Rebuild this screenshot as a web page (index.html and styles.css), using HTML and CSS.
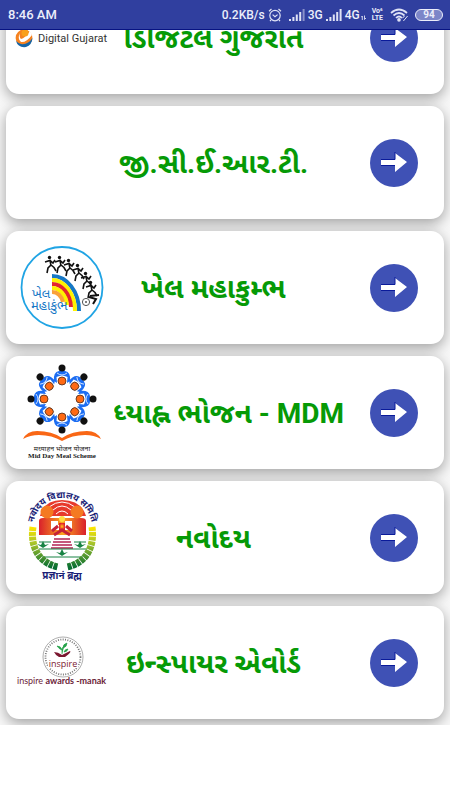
FILE: index.html
```
<!DOCTYPE html>
<html lang="gu">
<head>
<meta charset="utf-8">
<meta name="viewport" content="width=device-width, initial-scale=1">
<title>Digital Gujarat</title>
<link rel="stylesheet" href="styles.css">
</head>
<body>

<header class="statusbar">
	<span class="time">8:46 AM</span>
	<div class="status">
		<span>0.2KB/s</span>
		<svg width="14" height="14" viewBox="0 0 14 14" fill="none" stroke="#dfe2f5" stroke-width="1.2"><circle cx="7" cy="7.6" r="5.2"/><path d="M1 3.2L3.5 1M13 3.2L10.5 1M3 12l-1 1.2M11 12l1 1.2M4.6 6.6L7 8.8l2.6-2.2"/></svg>
		<svg class="signal" width="16" height="12" viewBox="0 0 16 12" fill="#dfe2f5"><path d="M0 10h2v2H0zM3.4 8h2v4h-2zM6.8 5.5h2V12h-2zM10.2 3h2v9h-2z"/><path d="M13.6 0h2v12h-2z" opacity=".5"/></svg>
		<span>3G</span>
		<svg width="16" height="12" viewBox="0 0 16 12" fill="#dfe2f5"><path d="M0 10h2v2H0zM3.4 8h2v4h-2zM6.8 5.5h2V12h-2zM10.2 3h2v9h-2zM13.6 0h2v12h-2z"/></svg>
		<span>4G</span>
		<svg class="updown" width="5" height="12" viewBox="0 0 5 12" fill="none" stroke="#dfe2f5" stroke-width=".9"><path d="M1.3 11V7L0 8.4M3.5 6.5v4L5 9"/></svg>
		<span class="volte">Vo&#8310;<br>LTE</span>
		<svg class="wifi" width="19" height="14" viewBox="0 0 19 14" fill="none" stroke="#dfe2f5" stroke-width="1.7"><path d="M1 5Q9 -2 17 5M3.5 7.5Q9 2.5 14.5 7.5M6 10Q9 7 12 10"/><circle cx="9" cy="11.8" r="1" fill="#dfe2f5"/><path d="M13.4 13l4.2-5M12.5 10.2l2-2.2" stroke-width="1"/></svg>
		<span class="battery">94</span>
	</div>
</header>

<main class="list">

	<section class="card">
		<svg class="logo" viewBox="0 0 100 113">
			<circle cx="10" cy="57" r="8.4" fill="#f58220"/>
			<path d="M2 60Q4 67 12 66Q18 64 18.500 57Q14 64 7 63Q4 62 2 60z" fill="#1565a7"/>
			<path d="M6 52Q3 58 7 61Q12 62 18 54L16 50Q11 57 7 58Q5 56 6 52z" fill="#fff"/>
			<circle cx="11" cy="52" r="3.500" fill="#f9a01b"/>
			<text x="24" y="61" class="digital">Digital Gujarat</text>
		</svg>
		<h2 class="title">ડિજિટલ ગુજરાત</h2>
		<button class="go" aria-label="ડિજિટલ ગુજરાત"><svg viewBox="0 0 28 22"><path d="M1 8h14V1l12 9-12 10v-7H1z" fill="#fff"/><path d="M1 7.500h14V0M1 13.500h14" fill="none" stroke="#0a1a9a"/></svg></button>
	</section>

	<section class="card">
		<div class="logo"></div>
		<h2 class="title">જી.સી.ઈ.આર.ટી.</h2>
		<button class="go" aria-label="જી.સી.ઈ.આર.ટી."><svg viewBox="0 0 28 22"><path d="M1 8h14V1l12 9-12 10v-7H1z" fill="#fff"/><path d="M1 7.500h14V0M1 13.500h14" fill="none" stroke="#0a1a9a"/></svg></button>
	</section>

	<section class="card">
		<svg class="logo" viewBox="0 0 100 113">
			<defs>
				<g id="runner">
					<circle cx="-.5" cy="-6.500" r="1.700" fill="#111"/>
					<path d="M0-4L1 2M-5-2L0-3.500L3-1L5-4M1 1L-2 4L-3 9M1 1L4 3.500L6 7" fill="none" stroke="#111" stroke-width="1.600"/>
				</g>
			</defs>
			<circle cx="48" cy="56.500" r="40.500" fill="#fff" stroke="#20a4e4" stroke-width="1.800"/>
			<g fill="none" stroke-width="4">
				<path d="M38 45A27 35 0 0 1 65 80" stroke="#1677c5"/>
				<path d="M38 49A23 31 0 0 1 61 80" stroke="#fff200"/>
				<path d="M38 53A19 25 0 0 1 57 76" stroke="#e3252e"/>
				<path d="M38 57A15 19 0 0 1 53 74" stroke="#fff200"/>
				<path d="M38 61A11 13 0 0 1 49 71" stroke="#f9a13a"/>
			</g>
			<use href="#runner" x="36" y="33"/>
			<use href="#runner" x="46" y="33"/>
			<use href="#runner" x="55" y="36"/>
			<use href="#runner" x="64" y="41"/>
			<use href="#runner" x="72" y="49"/>
			<use href="#runner" x="77" y="58"/>
			<circle cx="72" cy="71" r="3.600" fill="none" stroke="#555"/>
			<circle cx="72" cy="71" r="1" fill="#555"/>
			<path d="M75 66l7 2-3 5M76 65l9-1" stroke="#111" stroke-width="2" fill="none"/>
			<text x="18" y="67" class="khel">ખેલ</text>
			<text x="17" y="79" class="khel">મહાકુંભ</text>
		</svg>
		<h2 class="title">ખેલ મહાકુમ્ભ</h2>
		<button class="go" aria-label="ખેલ મહાકુમ્ભ"><svg viewBox="0 0 28 22"><path d="M1 8h14V1l12 9-12 10v-7H1z" fill="#fff"/><path d="M1 7.500h14V0M1 13.500h14" fill="none" stroke="#0a1a9a"/></svg></button>
	</section>

	<section class="card">
		<svg class="logo" viewBox="0 0 100 113">
			<defs>
				<g id="child">
					<path d="M-8-18Q-9-27-3-28H3Q9-27 8-18L5-16L5.500-22Q0-25-5.500-22L-5-16z" fill="#1c6df2"/>
					<path d="M-5-26Q0-22 5-26" fill="none" stroke="#fff" stroke-width=".8"/>
					<circle cx="0" cy="-31" r="3.500" fill="#111"/>
					<circle cx="0" cy="-18" r="4" fill="#ff6a13" stroke="#4a2a1a" stroke-width=".8"/>
				</g>
			</defs>
			<g transform="translate(48 43)">
				<use href="#child"/>
				<use href="#child" transform="rotate(45)"/>
				<use href="#child" transform="rotate(90)"/>
				<use href="#child" transform="rotate(135)"/>
				<use href="#child" transform="rotate(180)"/>
				<use href="#child" transform="rotate(225)"/>
				<use href="#child" transform="rotate(270)"/>
				<use href="#child" transform="rotate(315)"/>
			</g>
			<path d="M9 83Q13 75 23 75Q38 75 48 82Q58 75 73 75Q83 75 87 83Q80 79 71 79Q58 79 48 85Q38 79 25 79Q16 79 9 83z" fill="#f96715"/>
			<text x="48" y="95" class="mdm-hi">मध्याहन भोजन योजना</text>
			<text x="48" y="102" class="mdm-en">Mid Day Meal Scheme</text>
		</svg>
		<h2 class="title scrolled"><span>મધ્યાહ્ન ભોજન - MDM</span></h2>
		<button class="go" aria-label="મધ્યાહ્ન ભોજન"><svg viewBox="0 0 28 22"><path d="M1 8h14V1l12 9-12 10v-7H1z" fill="#fff"/><path d="M1 7.500h14V0M1 13.500h14" fill="none" stroke="#0a1a9a"/></svg></button>
	</section>

	<section class="card">
		<svg class="logo" viewBox="0 0 100 113">
			<defs>
				<radialGradient id="sun"><stop offset="0" stop-color="#ffd21c"/><stop offset=".5" stop-color="#f36b21"/><stop offset="1" stop-color="#e0202c"/></radialGradient>
				<linearGradient id="block"><stop offset="0" stop-color="#d9202c"/><stop offset=".5" stop-color="#fba51f"/><stop offset="1" stop-color="#d9202c"/></linearGradient>
				<linearGradient id="wreath" x1="0" y1="0" x2="0" y2="1"><stop offset="0" stop-color="#ffe600"/><stop offset=".4" stop-color="#a9c52a"/><stop offset="1" stop-color="#0a7032"/></linearGradient>
				<path id="ring" d="M20 52L19 47A29.500 30 0 0 1 78 47L77 52"/>
				<path id="leaf" d="M0 0L-6-4L-2-3L0-7L2-3L6-4z"/>
			</defs>
			<text class="navoday"><textPath href="#ring" startOffset="50%">नवोदय विद्यालय समिति</textPath></text>
			<path d="M26 35Q30 19 48 19Q67 19 72 35z" fill="#e7392c"/>
			<g fill="none" stroke="#fff"><path d="M39 29Q48 21 57 29M42 33Q48 27 54 33M35 26Q48 16 61 26"/></g>
			<path d="M25 40Q25 37 29 37H67Q72 37 72 40V54H25z" fill="url(#block)"/>
			<circle cx="33" cy="31" r="6.500" fill="#f47a22"/>
			<circle cx="63" cy="31" r="6.500" fill="#f47a22"/>
			<circle cx="48" cy="38" r="3" fill="#ffdc42"/>
			<path d="M37 40h7v4h7v-4h7v9H37z" fill="#fff"/>
			<path d="M45 42h6v7h-6z" fill="url(#sun)"/>
			<path d="M38 50L44 45M58 50L52 45M40 54L48 49L56 54" stroke="#c52238" stroke-width="3" fill="none"/>
			<g fill="none" stroke="#b22352" stroke-width="1.400"><path d="M40 58h16M39 61h18M38 64h20M37 67h22"/></g>
			<path d="M25 61h12M60 61h12M25 68h48M28 76h41" stroke="#188344"/>
			<g fill="#188344"><use href="#leaf" x="29" y="67"/><use href="#leaf" x="66" y="67"/><use href="#leaf" x="48" y="75"/></g>
			<g fill="none" stroke="url(#wreath)">
				<path d="M19 46C16 66 25 82 44 86" stroke-width="7" stroke-dasharray="4 .8"/>
				<path d="M78 46C81 66 72 82 53 86" stroke-width="7" stroke-dasharray="4 .8"/>
			</g>
			<text x="48" y="98" class="brahma">प्रज्ञानं ब्रह्म</text>
		</svg>
		<h2 class="title">નવોદય</h2>
		<button class="go" aria-label="નવોદય"><svg viewBox="0 0 28 22"><path d="M1 8h14V1l12 9-12 10v-7H1z" fill="#fff"/><path d="M1 7.500h14V0M1 13.500h14" fill="none" stroke="#0a1a9a"/></svg></button>
	</section>

	<section class="card">
		<svg class="logo" viewBox="0 0 100 113">
			<circle cx="49" cy="51" r="20" fill="#fff" stroke="#999" stroke-width=".8"/>
			<circle cx="49" cy="51" r="17.500" fill="none" stroke="#777" stroke-width="1.800" stroke-dasharray="1 1.400"/>
			<path d="M34 53h30v9H34z" fill="#fff"/>
			<path d="M40 46Q44 46 48 49L56 45Q58 46 51 51H45Q42 50 40 46z" fill="#7b1830"/>
			<path d="M48 48Q47 42 51 38M48 44Q45 43 43 40Q47 40 48 44M49 42Q49 38 53 37Q53 41 49 42M50 46Q51 43 54 43Q53 46 50 46" fill="#26a34b" stroke="#26a34b" stroke-width=".7"/>
			<text x="49" y="61" class="inspire">inspire</text>
			<text x="3" y="78" class="manak">inspire <tspan class="strong">awards -manak</tspan></text>
		</svg>
		<h2 class="title">ઇન્સ્પાયર એવોર્ડ</h2>
		<button class="go" aria-label="ઇન્સ્પાયર એવોર્ડ"><svg viewBox="0 0 28 22"><path d="M1 8h14V1l12 9-12 10v-7H1z" fill="#fff"/><path d="M1 7.500h14V0M1 13.500h14" fill="none" stroke="#0a1a9a"/></svg></button>
	</section>

</main>
</body>
</html>
```

FILE: styles.css
```
*{
box-sizing:border-box;
}
body{
margin:0;
background-color:#ffffff;
font-family:"Noto Sans", "Noto Sans Gujarati", sans-serif;
overflow:hidden;
}
.statusbar{
position:relative;
z-index:2;
display:flex;
align-items:center;
justify-content:space-between;
height:30px;
padding:0 7px 0 8px;
background-color:#303f9f;
border-bottom:1px solid #071382;
color:#eceefa;
font-family:Roboto, sans-serif;
font-size:13px;
font-weight:500;
}
.status{
display:flex;
align-items:center;
gap:3px;
font-size:12px;
}
.signal{
margin-left:4px;
}
.updown{
margin-left:-2px;
}
.volte{
font-size:7px;
line-height:7px;
font-weight:700;
margin:0 4px 0 3px;
}
.wifi{
margin-right:3px;
}
.battery{
width:28px;
height:12px;
border:1px solid #eceefa;
border-radius:6px;
background-color:#7c86c8;
font-size:10px;
line-height:10px;
font-weight:700;
text-align:center;
}
/* the list is scrolled, the first card goes under the status bar */
.list{
display:flex;
flex-direction:column;
gap:12px;
margin-top:-49px;
padding:0 6px 6px;
background-color:#f8f8f8;
overflow:hidden;
}
.card{
display:flex;
align-items:center;
height:113px;
padding:0 26px 0 8px;
background-color:#ffffff;
border-radius:13px;
box-shadow:0 4px 14px rgba(0,0,0,0.36);
}
.logo{
flex:none;
width:100px;
height:113px;
}
.title{
flex:1;
min-width:0;
margin:0;
padding:2px 45px 0 0;
overflow:hidden;
white-space:nowrap;
text-align:center;
color:#069a06;
font-family:Roboto, "Noto Sans Gujarati", "Noto Sans", sans-serif;
font-size:28px;
line-height:48px;
font-weight:700;
}
.scrolled{
display:flex;
justify-content:flex-end;
padding-right:14px;
}
.go{
flex:none;
display:flex;
align-items:center;
justify-content:center;
width:48px;
height:48px;
margin-left:12px;
padding:0;
border:none;
border-radius:50%;
background-color:#3f51b5;
cursor:pointer;
}
.go svg{
width:28px;
height:22px;
}
.digital{
font-family:Roboto, sans-serif;
font-size:11px;
fill:#333333;
}
.khel{
font-size:13px;
fill:#1677c5;
}
.mdm-hi{
font-size:7px;
text-anchor:middle;
fill:#222222;
}
.mdm-en{
font-family:"Liberation Serif", serif;
font-size:7px;
font-weight:700;
text-anchor:middle;
fill:#222222;
}
.navoday{
font-size:9px;
font-weight:700;
text-anchor:middle;
fill:#1b1f78;
}
.brahma{
font-size:10px;
font-weight:700;
text-anchor:middle;
fill:#1b1f78;
}
.inspire{
font-family:"Open Sans", sans-serif;
font-size:9px;
text-anchor:middle;
fill:#7b1830;
}
.manak{
font-family:Lato, sans-serif;
font-size:9px;
fill:#6b2338;
}
.strong{
font-weight:700;
}
```
